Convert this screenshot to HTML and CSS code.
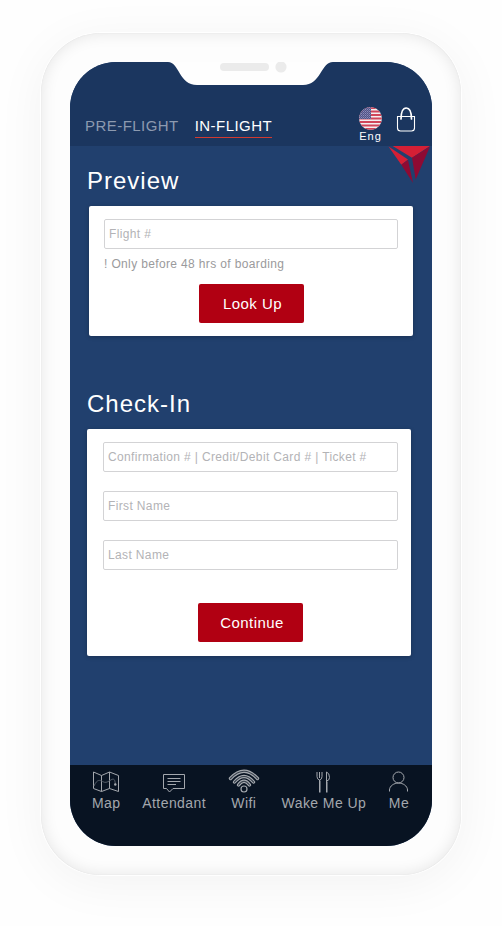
FILE: index.html
```html
<!DOCTYPE html>
<html lang="en">
<head>
<meta charset="utf-8">
<meta name="viewport" content="width=device-width, initial-scale=1">
<title>In-Flight Check-In</title>
<link rel="stylesheet" href="styles.css">
</head>
<body>
<div class="phone">
  <div class="screen">
    <svg class="notch" viewBox="0 0 170 24" aria-hidden="true">
      <path fill="#fefefe" d="M0 0H3C14 0 14 23 32 23H138C156 23 156 0 168 0H170Z"/>
      <rect x="55" y="1" width="49" height="8" rx="4" fill="#ebebeb"/>
      <circle cx="116" cy="5" r="5.6" fill="#ebebeb"/>
    </svg>
    <header class="topbar">
      <nav class="tabs" aria-label="Trip phase">
        <a class="tab" href="#pre">PRE-FLIGHT</a>
        <a class="tab active" href="#in" aria-current="page">IN-FLIGHT</a>
      </nav>
      <div class="tools">
        <button class="lang" type="button">
          <svg width="23" height="23" viewBox="0 0 23 23" aria-hidden="true">
            <defs>
              <clipPath id="disc"><circle cx="11.5" cy="11.5" r="11.3"/></clipPath>
              <pattern id="stars" width="2" height="2" patternUnits="userSpaceOnUse">
                <rect width="2" height="2" fill="#50508a"/>
                <rect width="1" height="1" fill="#8f8fb8"/>
                <rect x="1" y="1" width="1" height="1" fill="#77779f"/>
              </pattern>
            </defs>
            <g clip-path="url(#disc)">
              <rect width="23" height="23" fill="#f4eef0"/>
              <path stroke="#d0455a" stroke-width="1.8" d="M0 1H23M0 4.5H23M0 8H23M0 11.5H23M0 15H23M0 18.5H23M0 22H23"/>
              <rect width="12" height="12" fill="url(#stars)"/>
            </g>
          </svg>
          <span>Eng</span>
        </button>
        <button class="bag" type="button" aria-label="Bag">
          <svg width="22" height="25" viewBox="0 0 22 25" fill="none" stroke="#fff" aria-hidden="true">
            <path stroke-width="1.1" d="M2.5 9.5H19.5V21Q19.5 24 16.500 24H5.500Q2.500 24 2.500 21Z"/>
            <path stroke-width="1.7" stroke-linecap="round" d="M6 12C6 5 8 1 11.200 1S16.500 5 16.500 12"/>
          </svg>
        </button>
      </div>
    </header>

    <main class="content">
      <svg class="brand" viewBox="0 0 44 38" aria-hidden="true">
        <path fill="#d51f35" d="M4.700 0H42L24 11.700ZM.5 .5L20 13.500L13.300 18.700Z"/>
        <path fill="#8e0a33" d="M42 .5L27.700 33.500L24 11.700ZM20 14L13.300 18.700L25 37Z"/>
      </svg>
      <section class="block">
        <h1>Preview</h1>
        <form class="card preview">
          <input type="text" placeholder="Flight #" aria-label="Flight number">
          <p class="note">! Only before 48 hrs of boarding</p>
          <button class="cta" type="button">Look Up</button>
        </form>
      </section>
      <section class="block">
        <h1>Check-In</h1>
        <form class="card checkin">
          <input type="text" placeholder="Confirmation # | Credit/Debit Card # | Ticket #" aria-label="Confirmation, card or ticket number">
          <input type="text" placeholder="First Name" aria-label="First name">
          <input type="text" placeholder="Last Name" aria-label="Last name">
          <button class="cta" type="button">Continue</button>
        </form>
      </section>
    </main>

    <nav class="bottombar" aria-label="Main">
      <a href="#map">
        <svg width="28" height="24" viewBox="0 0 28 24" aria-hidden="true">
          <path d="M1.500 3L9.500 6.500L17.500 3L26.500 6.500V22.500L17.500 19.500L9.500 22.500L1.500 19.500ZM9.500 6.500V22.500M17.500 3V19.500"/>
          <path class="faint" d="M2 17C5 10 8 11 10.500 12.500S15 13.500 18 11.500S23 9 23.300 15"/>
          <circle class="dot" cx="23.300" cy="15.500" r="1.2"/>
        </svg>
        <span>Map</span>
      </a>
      <a href="#attendant">
        <svg width="24" height="24" viewBox="0 0 24 24" aria-hidden="true">
          <path d="M1.500 5.500H22.500V19.500H11L7.500 23L4.500 19.500H1.500ZM5.500 9.500H18.500M5.500 12.500H18.500M5.500 15.500H14"/>
        </svg>
        <span>Attendant</span>
      </a>
      <a href="#wifi">
        <svg width="32" height="24" viewBox="0 0 32 24" aria-hidden="true">
          <g class="band"><path d="M2.500 9.500Q16-5 29.500 9.500"/><path d="M6.500 13Q16 2 25.500 13"/><path d="M10.500 16Q16 8.500 21.500 16"/></g>
          <g class="core"><path d="M2.500 9.500Q16-5 29.500 9.500"/><path d="M6.500 13Q16 2 25.500 13"/><path d="M10.500 16Q16 8.500 21.500 16"/></g>
          <circle class="hub" cx="16" cy="20" r="3"/>
        </svg>
        <span>Wifi</span>
      </a>
      <a href="#wake">
        <svg width="18" height="24" viewBox="0 0 18 24" aria-hidden="true">
          <path d="M2 3V7.500Q2 10.500 4.500 11V23.500M7 3V7.500Q7 10.500 4.500 11M4.500 3V9"/>
          <path d="M11.500 23.500V3Q14.500 4 14.500 8.500Q14.500 11.500 11.500 12"/>
          <path class="faint" d="M5.500 11.500V23.500M12.500 12.500V23.500"/>
        </svg>
        <span>Wake Me Up</span>
      </a>
      <a href="#me">
        <svg width="22" height="24" viewBox="0 0 22 24" aria-hidden="true">
          <circle cx="10.500" cy="8.500" r="5.500"/>
          <path d="M1.500 22.500V21C1.500 17 6 14 10.500 14S19.500 17 19.500 21V22.500"/>
        </svg>
        <span>Me</span>
      </a>
    </nav>
  </div>
</div>
</body>
</html>
```
FILE: styles.css
```css
* {
  box-sizing: border-box;
}

body {
  margin: 0;
  min-height: 100vh;
  display: flex;
  padding: 33px 41px 51px;
  background: #fefefe;
  font-family: "Liberation Sans", Arial, sans-serif;
}

a,
button,
input,
p {
  letter-spacing: 0.03em;
}

.phone {
  flex: 1;
  display: flex;
  padding: 29px;
  border-radius: 60px;
  background: #fdfdfd;
  box-shadow:
    0 0 1px 1px #fff,
    0 8px 50px rgba(0, 0, 0, 0.05),
    inset 0 0 1px rgba(0, 0, 0, 0.12),
    inset 0 0 16px rgba(0, 0, 0, 0.1);
}

.screen {
  position: relative;
  flex: 1;
  min-width: 0;
  display: flex;
  flex-direction: column;
  overflow: hidden;
  border-radius: 46px;
  background: #21406e;
}

.notch {
  position: absolute;
  top: 0;
  left: 50%;
  width: 170px;
  height: 24px;
  margin-left: -86px;
}

.topbar {
  display: flex;
  justify-content: space-between;
  align-items: flex-end;
  padding: 45px 15px 4px 15px;
  background: #1b365f;
}

.tabs {
  display: flex;
  gap: 16px;
  padding-bottom: 4px;
}

.tab {
  padding-bottom: 3px;
  border-bottom: 1px solid transparent;
  font-size: 15px;
  line-height: 16px;
  color: #8d9ab0;
  text-decoration: none;
}

.tab.active {
  color: #fff;
  border-bottom-color: #d23a30;
}

.tools {
  display: flex;
  align-items: flex-start;
  gap: 13px;
}

button {
  padding: 0;
  border: 0;
  background: none;
  color: #fff;
  font: inherit;
}

.lang {
  display: flex;
  flex-direction: column;
  align-items: center;
  font-size: 11px;
  line-height: 12px;
  letter-spacing: 1px;
}

.bag svg {
  display: block;
}

.content {
  position: relative;
  flex: 1;
  padding: 21px 17px 40px;
}

.brand {
  position: absolute;
  top: 0;
  right: 0;
  width: 44px;
  height: 38px;
}

.block + .block {
  margin-top: 54px;
}

h1 {
  margin: 0 0 11px;
  font-size: 24px;
  line-height: 28px;
  font-weight: 400;
  letter-spacing: 1px;
  color: #fff;
}

.card {
  display: flex;
  flex-direction: column;
  border-radius: 2px;
  background: #fff;
  box-shadow: 0 1px 4px rgba(0, 0, 0, 0.25);
}

.preview {
  margin: 0 2px;
  padding: 13px 15px;
}

.checkin {
  margin-right: 4px;
  padding: 13px 13px 14px 16px;
  gap: 19px;
}

input {
  width: 100%;
  height: 30px;
  padding: 0 4px;
  border: 1px solid #d3d3d5;
  border-radius: 2px;
  background: #fff;
  font: inherit;
  font-size: 12px;
  color: #555;
}

input::placeholder {
  color: #b3b3b6;
  opacity: 1;
}

.note {
  margin: 8px 0 13px;
  font-size: 12px;
  line-height: 14px;
  color: #9a9a9c;
}

.cta {
  align-self: center;
  width: 105px;
  height: 39px;
  padding-left: 3px;
  border-radius: 2px;
  background: #b10012;
  font-size: 15px;
}

.checkin .cta {
  margin-top: 14px;
}

.bottombar {
  display: flex;
  justify-content: space-between;
  padding: 4px 22px 35px;
  background: #081322;
}

.bottombar a {
  display: flex;
  flex-direction: column;
  align-items: center;
  gap: 2px;
  font-size: 14px;
  line-height: 16px;
  color: #a3a7ad;
  text-decoration: none;
}

.bottombar svg {
  fill: none;
  stroke: #a3a7ad;
  stroke-width: 1;
}

.bottombar .faint {
  stroke: #565e69;
}

.bottombar .dot {
  fill: #a3a7ad;
  stroke: none;
}

.bottombar .band {
  stroke-width: 3.4;
  stroke-linecap: round;
}

.bottombar .core {
  stroke: #39424e;
  stroke-width: 1.2;
  stroke-linecap: round;
}

.bottombar .hub {
  fill: #081322;
  stroke-width: 1.2;
}
```
